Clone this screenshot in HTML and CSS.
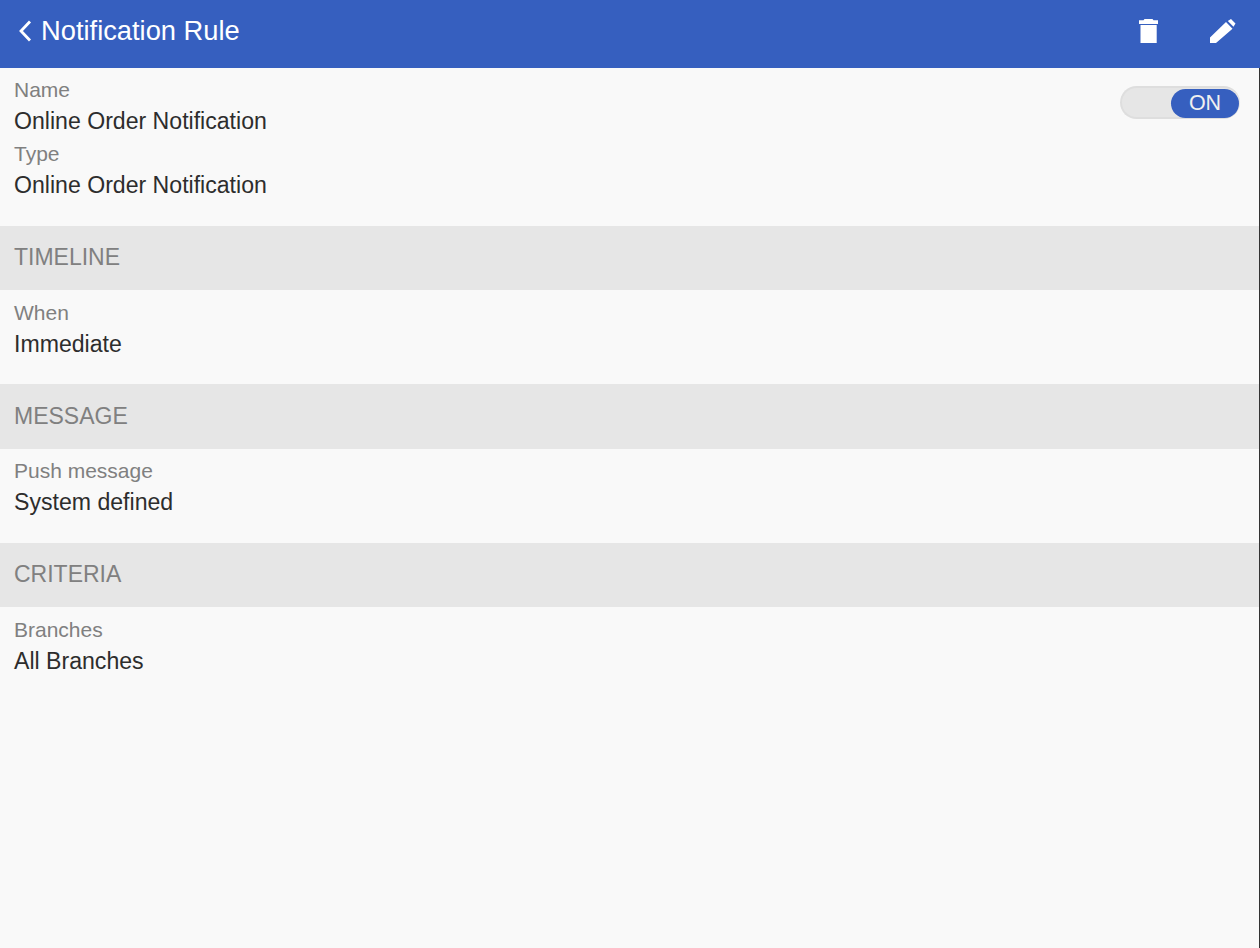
FILE: index.html
```html
<!DOCTYPE html>
<html lang="en">
<head>
<meta charset="utf-8">
<title>Notification Rule</title>
<link rel="stylesheet" href="styles.css">
</head>
<body>
<div class="app">
  <header class="topbar">
    <div class="title-group">
      <svg class="back" width="16" height="24" viewBox="0 0 16 24"><path d="M12 2.500 3 12l9 9.500" fill="none" stroke="#fff" stroke-width="2.800"/></svg>
      <h1 class="title">Notification Rule</h1>
    </div>
    <div class="actions">
      <svg class="trash" width="20" height="26" viewBox="0 0 20 26"><path fill="#fff" d="M5.500 1h8l1 1.200H19V6H0V2.200h4.500zM1.500 7h16.200v18H1.500z"/></svg>
      <svg class="pencil" width="26" height="26" viewBox="0 0 26 26"><path fill="#fff" d="M0 25v-5.500L16 4l6.500 6.800L6 25zM17.800 3l3.200-2 4.500 4.500-2 3.200z"/></svg>
    </div>
  </header>
  <main class="content">
    <section class="block block-first">
      <div class="toggle"><span class="toggle-on">ON</span></div>
      <div class="field"><div class="label">Name</div><div class="value">Online Order Notification</div></div>
      <div class="field"><div class="label">Type</div><div class="value">Online Order Notification</div></div>
    </section>
    <h2 class="band">TIMELINE</h2>
    <section class="block">
      <div class="field"><div class="label">When</div><div class="value">Immediate</div></div>
    </section>
    <h2 class="band band-tall">MESSAGE</h2>
    <section class="block block-tight">
      <div class="field"><div class="label">Push message</div><div class="value">System defined</div></div>
    </section>
    <h2 class="band">CRITERIA</h2>
    <section class="block">
      <div class="field"><div class="label">Branches</div><div class="value">All Branches</div></div>
    </section>
  </main>
</div>
</body>
</html>
```
FILE: styles.css
```css
* { box-sizing: border-box; }
html, body { margin: 0; height: 100%; }
body { font-family: "Liberation Sans", Arial, sans-serif; background: #f9f9f9; overflow: hidden; }
.app { height: 948px; display: flex; flex-direction: column; }
.topbar { height: 68px; background: #365fbf; display: flex; align-items: center; justify-content: space-between; padding: 0 24px 6px 18px; flex: none; }
.title-group { display: flex; align-items: center; gap: 7px; }
.back { display: block; }
.title { margin: 0; font-size: 27.300px; font-weight: 400; color: #fff; line-height: 32px; }
.actions { display: flex; align-items: center; gap: 51px; }
.trash, .pencil { display: block; }
.content { flex: 1; border-right: 1px solid #333; position: relative; }
.block { padding: 11px 14px 19px; height: 94px; }
.block-tight { padding-top: 10px; }
.block-first { height: 158px; padding-top: 10px; position: relative; }
.field { height: 64px; }
.label { font-size: 21px; line-height: 24px; color: #808080; }
.value { font-size: 23.100px; line-height: 38px; color: #2d2d2d; }
.band { margin: 0; height: 64px; padding: 0 14px; background: #e6e6e6; font-size: 23px; font-weight: 400; line-height: 62px; color: #808080; }
.band-tall { height: 65px; line-height: 64px; }
.toggle { position: absolute; top: 18px; right: 19px; width: 120px; height: 33px; border-radius: 17px; background: #e6e6e6; border: 2px solid #dedede; border-right-width: 0; padding: 1px 1px 0 0; display: flex; justify-content: flex-end; }
.toggle-on { width: 68px; height: 29px; border-radius: 15px; background: #365fbf; color: #f0f0f0; font-size: 21.500px; line-height: 29px; text-align: center; }
```
